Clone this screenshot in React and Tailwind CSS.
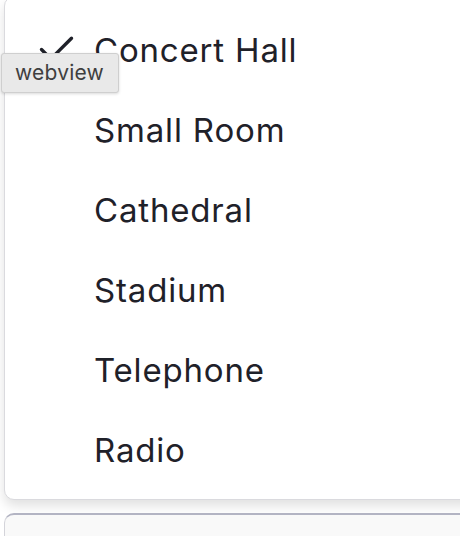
import { Check } from 'lucide-react'

const options = ['Concert Hall', 'Small Room', 'Cathedral', 'Stadium', 'Telephone', 'Radio']

function App() {
    return (
        <div className="relative w-[460px] h-[536px] overflow-hidden bg-white font-['Inter',sans-serif]">
            {/* dropdown menu */}
            <div className="ml-[4px] mt-[-4px] w-[480px] pt-[14px] pb-[8px] bg-white border border-[#dadade] rounded-[10px] shadow-[0_6px_12px_rgba(0,0,0,0.12)]">
                {options.map((name, i) => (
                    <div key={name} className="relative h-[80px] flex items-center pl-[89px] text-[33px] tracking-[0.025em] text-[#1f2129]">
                        {i === 0 && (
                            <Check className="absolute left-[29px] top-[16px] w-[45px] h-[45px] text-[#1f2129]" strokeWidth={1.8} />
                        )}
                        {name}
                    </div>
                ))}
            </div>

            {/* next control peeking below */}
            <div className="ml-[4px] mt-[13px] w-[480px] h-[40px] bg-[#f9f9f9] border border-[#d4d4da] border-t-2 border-t-[#b3b4c3] rounded-t-[10px]" />

            {/* tooltip */}
            <div className="absolute left-[1px] top-[53px] w-[118px] h-[40px] flex items-center pl-[13px] bg-[#e9e9e9] border border-[#cfcfcf] rounded-[3px] shadow-[0_1px_3px_rgba(0,0,0,0.15)] text-[21px] tracking-[0.01em] text-[#3f3f3f]">
                webview
            </div>
        </div>
    )
}

export default App
